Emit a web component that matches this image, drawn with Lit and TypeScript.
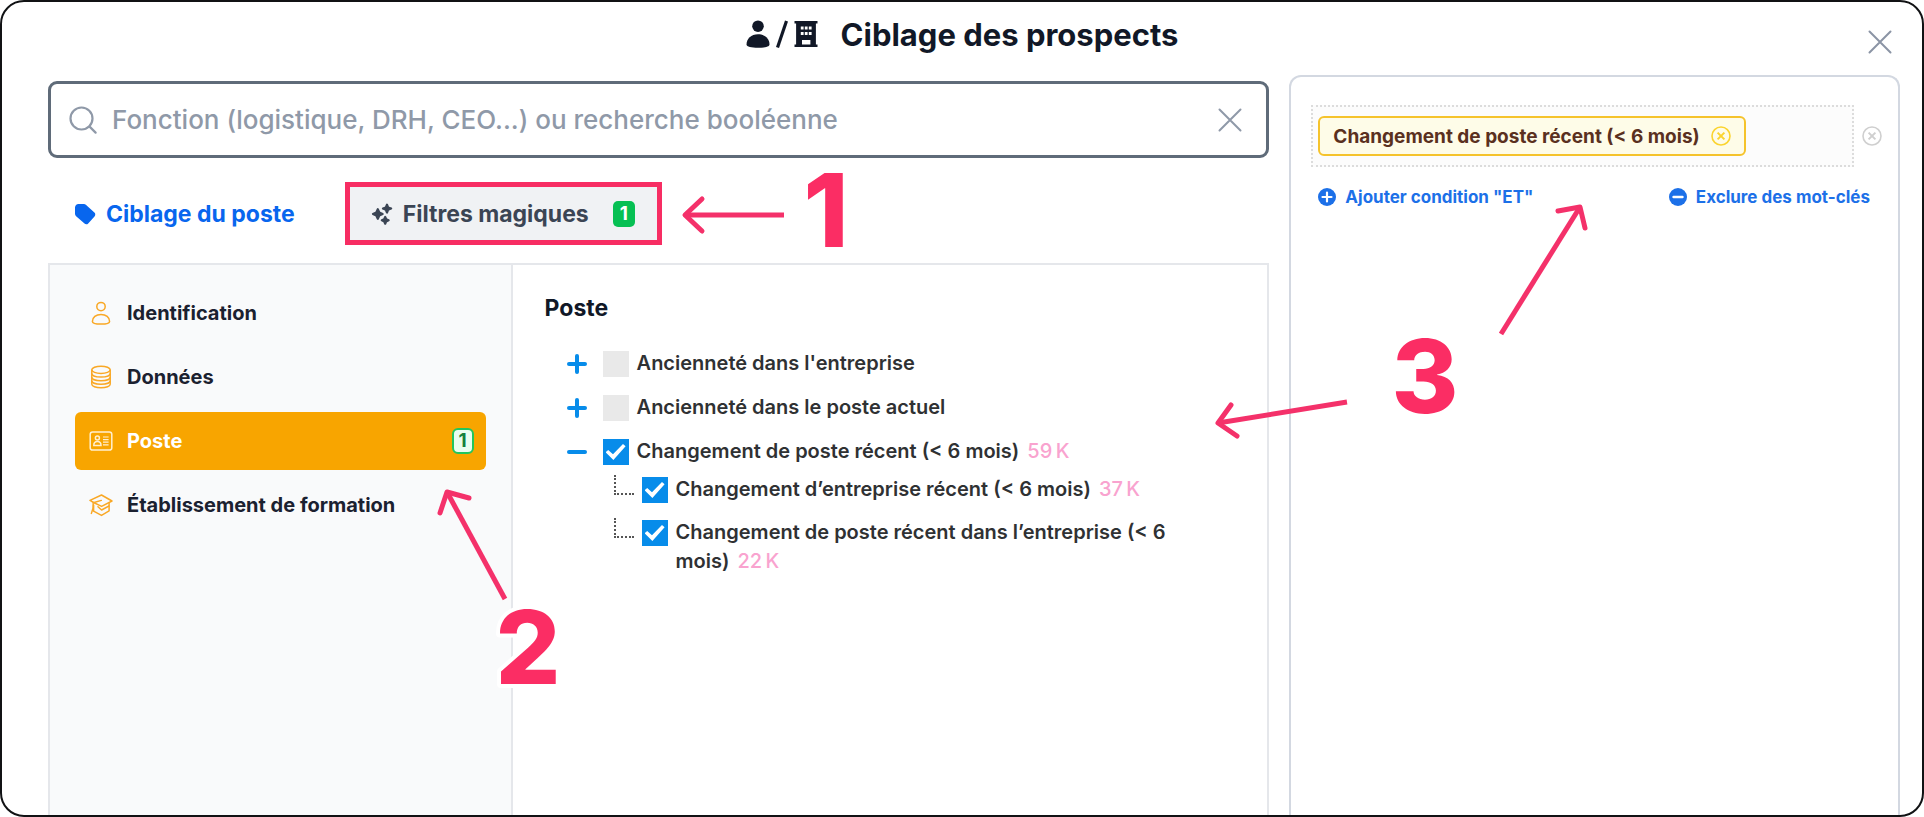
import { LitElement, html, css, svg, nothing } from "lit";
import { customElement, property, state } from "lit/decorators.js";
import { classMap } from "lit/directives/class-map.js";

const icons = {
  person: svg`<svg viewBox="0 0 24 24" width="24" height="24" fill="none" stroke="currentColor" stroke-width="1.5" stroke-linejoin="round">
    <circle cx="12" cy="5.6" r="4.2"/><path d="M3.4 20.4c0-4 3.6-7 8.600-7s8.600 3 8.600 7c0 1.600-3.600 2.600-8.600 2.600s-8.600-1-8.600-2.600z"/></svg>`,
  data: svg`<svg viewBox="0 0 24 24" width="24" height="24" fill="none" stroke="currentColor" stroke-width="1.5">
    <ellipse cx="12" cy="4.800" rx="9.200" ry="3.600"/><path d="M2.800 4.800v14.400c0 2 4 3.600 9.200 3.600s9.200-1.600 9.200-3.600V4.800"/>
    <path d="M2.800 8.600c0 2 4 3.500 9.200 3.500s9.200-1.500 9.200-3.500M2.800 12.200c0 2 4 3.500 9.200 3.500s9.200-1.500 9.200-3.500M2.800 15.700c0 2 4 3.500 9.200 3.500s9.200-1.500 9.200-3.500"/></svg>`,
  card: svg`<svg viewBox="0 0 24 24" width="24" height="24" fill="none" stroke="currentColor" stroke-width="1.5">
    <rect x="1.200" y="2.900" width="21.600" height="18.200" rx="2.400"/><circle cx="8.400" cy="9" r="2"/><path d="M4.800 16.400c0-2.400 1.600-3.800 3.600-3.800s3.600 1.400 3.600 3.800z"/>
    <path d="M14 8h5.600M14 10.600h5.600M14 13.200h5.600M14 15.800h5.600" stroke-width="1.200"/></svg>`,
  school: svg`<svg viewBox="0 0 24 24" width="24" height="24" fill="none" stroke="currentColor" stroke-width="1.5" stroke-linejoin="round" stroke-linecap="round">
    <path d="M12.500 2L1 7.400l3.600 2.100 8 3.900L23 8z"/><path d="M4.600 12v6.200l7.900 4.200 7.600-4.600V10"/><path d="M12.300 7.400L4.200 9.800l-.2 5.400-1.600 5.200M9 13.800l3.600 3.200 7.400-4"/></svg>`,
};

interface Category {
  label: string;
  icon: keyof typeof icons;
  count?: number;
}

interface Criterion {
  label: string;
  checked: boolean;
  total?: string;
  children?: Criterion[];
}

@customElement("category-item")
class CategoryItem extends LitElement {
  @property() label = "";
  @property() icon: keyof typeof icons = "person";
  @property({ type: Number }) count?: number;
  @property({ type: Boolean }) active = false;

  static styles = css`
    :host { display: block; }
    .item {
      display: flex; align-items: center; gap: 14px;
      width: 100%; min-height: 58px; padding: 0 12px 0 14px; box-sizing: border-box;
      border: 0; border-radius: 6px; background: none; cursor: pointer;
      font: 700 20px/28px Inter, sans-serif; color: #1b2130; text-align: left;
    }
    .icon { display: flex; color: #f9a826; }
    .label { flex: 1; }
    .item.active { background: #f8a500; color: #fff; }
    .active .icon { color: #fff0cf; }
    .badge {
      display: flex; align-items: center; justify-content: center;
      width: 22px; height: 26px; box-sizing: border-box;
      border: 2px solid #22c55e; border-radius: 6px; background: #e9fdf1;
      color: #15803d; font-size: 19px; font-weight: 700;
    }
  `;

  render() {
    return html`<button class=${classMap({ item: true, active: this.active })}>
      <span class="icon">${icons[this.icon]}</span>
      <span class="label">${this.label}</span>
      ${this.count ? html`<span class="badge">${this.count}</span>` : nothing}
    </button>`;
  }
}

@customElement("criteria-tree")
class CriteriaTree extends LitElement {
  @property({ attribute: false }) criteria: Criterion[] = [];

  static styles = css`
    :host { display: block; font: 600 20px/29px Inter, sans-serif; color: #2f3133; }
    ul { list-style: none; margin: 0; padding: 0; }
    .roots { display: flex; flex-direction: column; gap: 15px; }
    .row { display: flex; align-items: flex-start; gap: 8px; }
    .toggle {
      display: flex; align-items: center; justify-content: center; flex: none;
      width: 20px; height: 29px; margin: 0 8px 0 0; padding: 0;
      border: 0; background: none; color: #078cea; cursor: pointer;
    }
    .children { display: flex; flex-direction: column; gap: 14px; padding: 9px 0 0 47px; }
    .branch {
      flex: none; width: 20px; height: 20px; box-sizing: border-box;
      border-left: 2px dotted #555; border-bottom: 2px dotted #555;
    }
    input {
      appearance: none; flex: none; display: grid; place-items: center;
      width: 26px; height: 26px; margin: 2px 0 0; background: #e9e9e9; cursor: pointer;
    }
    input:checked { background: #078cea; }
    input:checked::after {
      content: ""; width: 20px; height: 16px; background: #fff;
      clip-path: polygon(0 52%, 13% 37%, 37% 64%, 87% 0, 100% 14%, 39% 100%);
    }
    label { cursor: pointer; }
    .total { margin-left: 3px; font-weight: 500; color: #f9a3cf; }
  `;

  private entry(c: Criterion, id: string) {
    return html`
      <input type="checkbox" id=${id} .checked=${c.checked} />
      <label for=${id}>${c.label}${c.total ? html` <span class="total">${c.total}</span>` : nothing}</label>`;
  }

  render() {
    return html`<ul class="roots">
      ${this.criteria.map((c, i) => html`<li>
        <div class="row">
          <button class="toggle" aria-label=${c.children ? "Replier" : "Déplier"}>
            <svg viewBox="0 0 20 20" width="20" height="20" stroke="currentColor" stroke-width="4" stroke-linecap="round">
              <path d="M2 10h16"/>${c.children ? nothing : svg`<path d="M10 2v16"/>`}
            </svg>
          </button>
          ${this.entry(c, `c${i}`)}
        </div>
        ${c.children ? html`<ul class="children">
          ${c.children.map((k, j) => html`<li class="row"><span class="branch"></span>${this.entry(k, `c${i}-${j}`)}</li>`)}
        </ul>` : nothing}
      </li>`)}
    </ul>`;
  }
}

@customElement("app-root")
class AppRoot extends LitElement {
  @state() private categories: Category[] = [
    { label: "Identification", icon: "person" },
    { label: "Données", icon: "data" },
    { label: "Poste", icon: "card", count: 1 },
    { label: "Établissement de formation", icon: "school" },
  ];

  @state() private criteria: Criterion[] = [
    { label: "Ancienneté dans l'entreprise", checked: false },
    { label: "Ancienneté dans le poste actuel", checked: false },
    {
      label: "Changement de poste récent (< 6 mois)", checked: true, total: "59\u2009K",
      children: [
        { label: "Changement d’entreprise récent (< 6 mois)", checked: true, total: "37\u2009K" },
        { label: "Changement de poste récent dans l’entreprise (< 6 mois)", checked: true, total: "22\u2009K" },
      ],
    },
  ];

  static styles = css`
    :host { display: block; font-family: Inter, sans-serif; color: #111827; }
    button { font: inherit; color: inherit; border: 0; background: none; padding: 0; cursor: pointer; }
    .dialog {
      position: relative; display: flex; flex-direction: column;
      min-height: 100vh; box-sizing: border-box; overflow: hidden;
      border: 2px solid #111214; border-radius: 24px; background: #fff;
    }
    header { display: grid; grid-template-columns: 1fr auto 1fr; min-height: 73px; padding: 0 30px; }
    h1 {
      grid-column: 2; display: flex; align-items: center; gap: 23px;
      margin: 0; height: 64px; font-size: 31px; font-weight: 700;
    }
    .who { display: flex; align-items: center; gap: 6px; }
    .close { justify-self: end; align-self: end; height: 66px; color: #8b94a5; display: flex; align-items: center; }
    main { flex: 1; display: grid; grid-template-columns: minmax(0, 2fr) minmax(0, 1fr); gap: 20px; padding: 0 22px 0 46px; }
    .left { display: flex; flex-direction: column; padding-top: 6px; }
    .search {
      display: flex; align-items: center; gap: 15px; height: 77px; box-sizing: border-box;
      padding: 0 24px 0 18px; border: 3px solid #5f6b79; border-radius: 9px; color: #8f99a8;
    }
    .search input {
      flex: 1; min-width: 0; border: 0; outline: 0; padding: 0; background: none;
      font: 500 26px/32px Inter, sans-serif; color: #111827;
    }
    .search input::placeholder { color: #8f99a8; opacity: 1; }
    .search button { display: flex; }
    .tabs { display: flex; gap: 24px; padding: 24px 0 18px; }
    .tab {
      display: flex; align-items: center; gap: 10px; height: 63px; box-sizing: border-box;
      padding: 0 26px; font-size: 23px; font-weight: 700; color: #0866ee;
    }
    .tab.selected { padding: 0 22px 0 21px; border: 5px solid #f72d63; background: #f0f2f4; color: #3b4554; }
    .badge {
      display: flex; align-items: center; justify-content: center;
      width: 22px; height: 26px; margin-left: 14px; border-radius: 5px;
      background: #06c053; color: #fff; font-size: 19px; font-weight: 700;
    }
    .filters {
      flex: 1; display: grid; grid-template-columns: 38% minmax(0, 1fr);
      border: 2px solid #e5e7eb; border-bottom: 0;
    }
    nav {
      display: flex; flex-direction: column; gap: 6px; padding: 19px 25px;
      border-right: 2px solid #e5e7eb; background: #f9fafb;
    }
    .criteria { padding: 29px 50px 24px 32px; }
    h2 { margin: 0 0 27px; font-size: 23px; line-height: 28px; font-weight: 700; }
    criteria-tree { padding-left: 22px; }
    aside {
      padding: 28px 16px 28px 20px; border: 2px solid #d3d8e1; border-bottom: 0;
      border-radius: 12px 12px 0 0; background: #fff;
    }
    .group { display: flex; align-items: center; gap: 8px; }
    .drop {
      flex: 1; display: flex; padding: 9px 5px; border: 2px dotted #dcdcdc; background: #fcfcfc;
    }
    .chip {
      display: flex; align-items: center; gap: 11px; height: 40px; box-sizing: border-box;
      padding: 0 13px; border: 2px solid #f5c32c; border-radius: 6px; background: #fefce8;
      color: #5a3020; font-size: 19px; font-weight: 700; white-space: nowrap;
    }
    .round { display: flex; color: #cfcfcf; }
    .chip .round { color: #fbd430; }
    .actions { display: flex; justify-content: space-between; padding: 17px 12px 0 7px; }
    .action { display: flex; align-items: center; gap: 9px; font-size: 17px; line-height: 26px; font-weight: 700; color: #1c70e8; text-decoration: none; }
    .marks { position: absolute; top: -2px; left: -2px; width: 1924px; height: 817px; pointer-events: none; }
    .marks path { fill: none; stroke: #f4316a; stroke-width: 5; stroke-linejoin: round; }
    .marks .head { stroke-linecap: round; }
    .marks text {
      font: 800 102px Inter, sans-serif; text-anchor: middle; fill: #fb2d64;
      stroke: #fff; stroke-width: 8; paint-order: stroke; stroke-linejoin: round;
    }
  `;

  private cross(size: number) {
    return html`<svg viewBox="0 0 24 24" width=${size} height=${size} stroke="currentColor" stroke-width="2" stroke-linecap="round"><path d="M1.500 1.500l21 21M22.500 1.500l-21 21"/></svg>`;
  }

  private circledCross() {
    return html`<svg viewBox="0 0 20 20" width="20" height="20" fill="none" stroke="currentColor" stroke-width="1.600"><circle cx="10" cy="10" r="9"/><path d="M6.600 6.600l6.800 6.800M13.400 6.600l-6.800 6.800" stroke-width="2"/></svg>`;
  }

  render() {
    return html`<div class="dialog">
      <header>
        <h1>
          <span class="who">
            <svg viewBox="0 0 24 28" width="24" height="28" fill="currentColor"><circle cx="12" cy="6.200" r="5.800"/><path d="M.5 24.500c0-5.800 4.700-10.300 11.500-10.300s11.500 4.500 11.500 10.300c0 2.200-5 3.300-11.500 3.300s-11.500-1.100-11.500-3.300z"/></svg>
            <svg viewBox="0 0 12 28" width="12" height="28" stroke="currentColor" stroke-width="3.200"><path d="M1.500 27.500l9-26.500"/></svg>
            <svg viewBox="0 0 24 28" width="24" height="28" fill="currentColor" fill-rule="evenodd"><path d="M.5 1h23v2.600h-1.600v21h1.600V27h-23v-2.400h1.600v-21H.5zM6.800 6.500v3h2.800v-3zm4 0v3h2.800v-3zm4 0v3h2.800v-3zM6.800 12v3h2.800v-3zm4 0v3h2.800v-3zm4 0v3h2.800v-3zM8 20v4.600h8.400V20z"/></svg>
          </span>
          Ciblage des prospects
        </h1>
        <button class="close" aria-label="Fermer">${this.cross(24)}</button>
      </header>
      <main>
        <section class="left">
          <div class="search">
            <svg viewBox="0 0 28 28" width="28" height="28" fill="none" stroke="currentColor" stroke-width="2.200" stroke-linecap="round"><circle cx="12.500" cy="12.500" r="11"/><path d="M20.600 20.600l6 6"/></svg>
            <input type="text" aria-label="Rechercher une fonction" placeholder="Fonction (logistique, DRH, CEO...) ou recherche booléenne" />
            <button aria-label="Effacer">${this.cross(24)}</button>
          </div>
          <div class="tabs">
            <button class="tab">
              <svg viewBox="0 0 22 22" width="22" height="22" fill="currentColor"><path d="M4.500 1h5.300c.9 0 1.700.3 2.300.9l8.300 7.700c1.100 1 1.200 2.700.1 3.800l-6.300 7c-1 1.100-2.500 1.200-3.700.2L2.400 13.500C1.500 12.700 1 11.700 1 10.500V4.600C1 2.600 2.500 1 4.500 1z"/></svg>
              Ciblage du poste
            </button>
            <button class="tab selected">
              <svg viewBox="0 0 22 22" width="22" height="22" fill="currentColor" stroke="currentColor" stroke-width="2.200" stroke-linejoin="round"><path d="M6.800 6.200l1.500 3.300L11.600 11l-3.300 1.500L6.800 15.800l-1.500-3.300L2 11l3.300-1.500zM16 1.700l1.100 2.700 3 1.200-3 1.200L16 9.500l-1.200-2.700-2.800-1.200 2.800-1.200zM14.200 14l1 2.200 2.400 1.100-2.400 1.100-1 2.300-1-2.300-2.300-1.100 2.300-1.100z"/></svg>
              Filtres magiques
              <span class="badge">1</span>
            </button>
          </div>
          <div class="filters">
            <nav>
              ${this.categories.map((c) => html`<category-item .label=${c.label} .icon=${c.icon} .count=${c.count} ?active=${c.label === "Poste"}></category-item>`)}
            </nav>
            <div class="criteria">
              <h2>Poste</h2>
              <criteria-tree .criteria=${this.criteria}></criteria-tree>
            </div>
          </div>
        </section>
        <aside>
          <div class="group">
            <div class="drop">
              <span class="chip">Changement de poste récent (&lt; 6 mois)
                <button class="round" aria-label="Retirer">${this.circledCross()}</button>
              </span>
            </div>
            <button class="round" aria-label="Supprimer la condition">${this.circledCross()}</button>
          </div>
          <div class="actions">
            <a class="action" href="#et">
              <svg viewBox="0 0 18 18" width="18" height="18"><circle cx="9" cy="9" r="9" fill="currentColor"/><path d="M4.500 9h9M9 4.500v9" stroke="#fff" stroke-width="2.200" stroke-linecap="round"/></svg>
              Ajouter condition "ET"
            </a>
            <a class="action" href="#exclure">
              <svg viewBox="0 0 18 18" width="18" height="18"><circle cx="9" cy="9" r="9" fill="currentColor"/><path d="M4.500 9h9" stroke="#fff" stroke-width="2.400" stroke-linecap="round"/></svg>
              Exclure des mot-clés
            </a>
          </div>
        </aside>
      </main>
      <svg class="marks" viewBox="0 0 1924 817">
        <path d="M784 215H685"/><path class="head" d="M702 199L685 215l17 16"/>
        <path d="M505 599L447 492"/><path class="head" d="M469 498l-22-6-7 21"/>
        <path d="M1347 402l-129 21"/><path class="head" d="M1231 405l-13 18 19 13"/>
        <path d="M1501 334l79-127"/><path class="head" d="M1558 211l22-4 5 21"/>
        <text x="826" y="247">1</text>
        <text x="528" y="684">2</text>
        <text x="1425" y="413">3</text>
      </svg>
    </div>`;
  }
}
